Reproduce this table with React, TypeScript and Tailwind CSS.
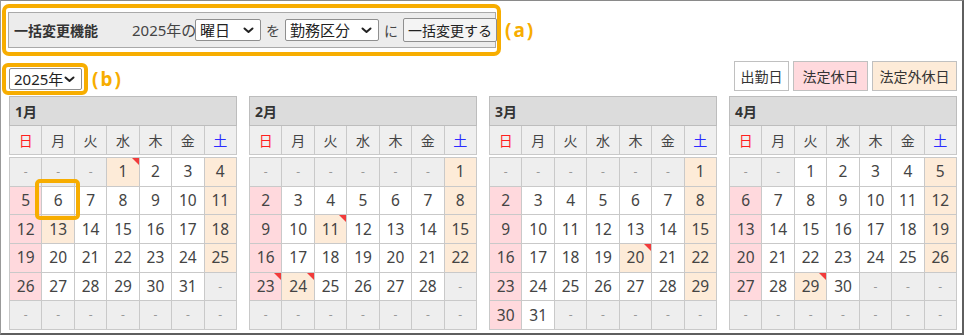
import React from "react";

type Month = {
  name: string;
  start: number;
  days: number;
  nonLegal: number[];
  marks: number[];
};

const MONTHS: Month[] = [
  { name: "1月", start: 3, days: 31, nonLegal: [1, 13], marks: [1] },
  { name: "2月", start: 6, days: 28, nonLegal: [11, 24], marks: [11, 23, 24] },
  { name: "3月", start: 6, days: 31, nonLegal: [20], marks: [20] },
  { name: "4月", start: 2, days: 30, nonLegal: [29], marks: [29] },
];

const WEEK = ["日", "月", "火", "水", "木", "金", "土"];

const Chevron = () => (
  <svg width="11" height="7" viewBox="0 0 11 7" className="shrink-0">
    <polyline
      points="1.5,1.5 5.5,5 9.5,1.5"
      fill="none"
      stroke="#222"
      strokeWidth="2"
      strokeLinecap="round"
      strokeLinejoin="round"
    />
  </svg>
);

const FakeSelect = ({ label, width }: { label: string; width: string }) => (
  <div
    className={`${width} shrink-0 h-[22px] flex items-center justify-between bg-white border border-[#8f8f8f] rounded-[2px] pl-[4px] pr-[6px] text-[15px] text-[#222] whitespace-nowrap`}
  >
    <span>{label}</span>
    <Chevron />
  </div>
);

const Orange = "border-[#f7ad00]";

const MonthCalendar = ({ month, highlight }: { month: Month; highlight?: number }) => {
  const cells: (number | null)[] = [];
  for (let i = 0; i < 42; i++) {
    const d = i - month.start + 1;
    cells.push(d >= 1 && d <= month.days ? d : null);
  }

  return (
    <div className="w-[228px]">
      <div className="h-[30px] border border-[#bdbdbd] bg-[#dcdcdc] flex items-center pl-[5px] text-[14px] font-bold text-[#333]">
        {month.name}
      </div>
      <div className="grid grid-cols-7 gap-px bg-[#c9c9c9] px-px pb-px">
        {WEEK.map((w, i) => (
          <div
            key={w}
            className={`h-[28px] bg-[#efefef] flex items-center justify-center text-[14px] ${
              i === 0 ? "text-[#ff1f1f]" : i === 6 ? "text-[#2b2bff]" : "text-[#444]"
            }`}
          >
            {w}
          </div>
        ))}
      </div>
      <div className="mt-[2px] grid grid-cols-7 gap-px bg-[#c9c9c9] p-px">
        {cells.map((d, i) => {
          const col = i % 7;
          let bg = "bg-white";
          if (d === null) bg = "bg-[#eeeeee]";
          else if (col === 0) bg = "bg-[#ffd9dd]";
          else if (col === 6 || month.nonLegal.includes(d)) bg = "bg-[#fdebd8]";
          return (
            <div
              key={i}
              className={`relative h-[27.7px] flex items-center justify-center ${bg} ${
                d === null ? "text-[12px] text-[#999]" : "text-[15.5px] text-[#444]"
              }`}
            >
              {d === null ? "-" : d}
              {d !== null && month.marks.includes(d) && (
                <svg width="7" height="7" viewBox="0 0 7 7" className="absolute top-0 right-0">
                  <polygon points="0,0 7,0 7,7" fill="#f23b3b" />
                </svg>
              )}
              {d !== null && d === highlight && (
                <div className={`absolute -left-[7px] -right-[6px] -top-[8px] -bottom-[6px] border-4 ${Orange} rounded-[5px] z-10`} />
              )}
            </div>
          );
        })}
      </div>
    </div>
  );
};

export default function App() {
  return (
    <div
      className="w-[964px] h-[335px] overflow-hidden bg-white border-t border-l border-t-[#8a8a8a] border-l-[#9a9a9a] border-r-2 border-b-2 border-r-[#5f5f5f] border-b-[#5f5f5f] text-[#333]"
      style={{ fontFamily: '"Noto Sans", "Noto Sans CJK JP", sans-serif' }}
    >
      {/* (a) 一括変更 */}
      <div className="flex items-center pl-[1px] pt-[3px]">
        <div className={`w-[499px] h-[52px] shrink-0 border-4 ${Orange} rounded-[7px] flex items-center pl-[2px]`}>
          <div className="w-[488px] h-[36px] shrink-0 border border-[#a9a9a9] bg-[#ececec] flex items-center pl-[5px] whitespace-nowrap">
            <span className="text-[14px] font-bold text-[#333] w-[118px] shrink-0">一括変更機能</span>
            <span className="text-[15px] text-[#444] w-[63px] shrink-0">2025年の</span>
            <FakeSelect label="曜日" width="w-[66px]" />
            <span className="text-[14px] text-[#444] mx-[5px] shrink-0">を</span>
            <FakeSelect label="勤務区分" width="w-[94px]" />
            <span className="text-[14px] text-[#444] mx-[5px] shrink-0">に</span>
            <div className="w-[94px] h-[24px] shrink-0 border border-[#8f8f8f] rounded-[2px] bg-[#f4f4f4] flex items-center justify-center text-[14px] text-[#222]">
              一括変更する
            </div>
          </div>
        </div>
        <span className="ml-[4px] text-[19px] font-bold tracking-[2px] text-[#f7ad00]">(a)</span>
      </div>

      {/* (b) 年選択 + 凡例 */}
      <div className="flex items-start justify-between pl-[1px] pr-[5px] mt-[5px]">
        <div className="flex items-center mt-[2px]">
          <div className={`w-[86px] h-[32px] border-4 ${Orange} rounded-[6px] flex items-center pl-[3px]`}>
            <FakeSelect label="2025年" width="w-[73px]" />
          </div>
          <span className="ml-[4px] text-[19px] font-bold tracking-[2px] text-[#f7ad00]">(b)</span>
        </div>
        <div className="flex gap-[4px] text-[14px] text-[#333]">
          <div className="w-[55px] h-[30px] border border-[#c0c0c0] bg-white flex items-center justify-center">出勤日</div>
          <div className="w-[75px] h-[30px] border border-[#c0c0c0] bg-[#ffd9dd] flex items-center justify-center">法定休日</div>
          <div className="w-[85px] h-[30px] border border-[#c0c0c0] bg-[#fdebd8] flex items-center justify-center">法定外休日</div>
        </div>
      </div>

      {/* カレンダー */}
      <div className="flex gap-[12px] pl-[8px] mt-[1px]">
        {MONTHS.map((m, i) => (
          <MonthCalendar key={m.name} month={m} highlight={i === 0 ? 6 : undefined} />
        ))}
      </div>
    </div>
  );
}
